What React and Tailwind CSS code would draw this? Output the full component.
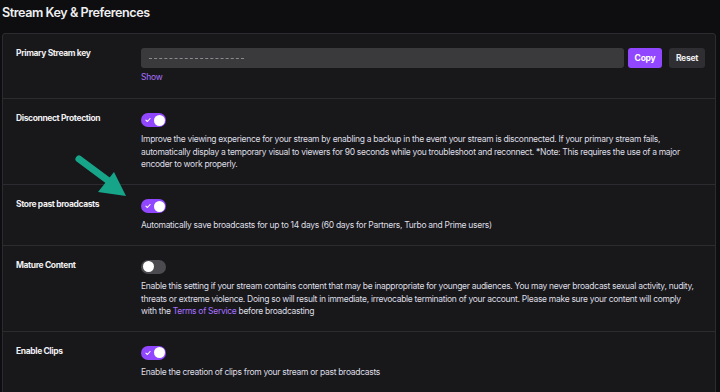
import { useState } from "react";

const ROWS = [
  {
    id: "disconnect",
    label: "Disconnect Protection",
    text: "Improve the viewing experience for your stream by enabling a backup in the event your stream is disconnected. If your primary stream fails, automatically display a temporary visual to viewers for 90 seconds while you troubleshoot and reconnect. *Note: This requires the use of a major encoder to work properly.",
  },
  {
    id: "store",
    label: "Store past broadcasts",
    text: "Automatically save broadcasts for up to 14 days (60 days for Partners, Turbo and Prime users)",
  },
  {
    id: "mature",
    label: "Mature Content",
    text: null,
  },
  {
    id: "clips",
    label: "Enable Clips",
    text: "Enable the creation of clips from your stream or past broadcasts",
  },
];

function Toggle({ on, onChange }) {
  return (
    <button
      onClick={onChange}
      className={`relative block h-[14px] w-[25px] rounded-full ${
        on ? "bg-[#9147ff]" : "bg-[#4b4b50]"
      }`}
    >
      {on && (
        <svg
          viewBox="0 0 10 10"
          className="absolute left-[4px] top-[4px] h-[6px] w-[6px]"
        >
          <path
            d="M1.5 5.2 L4 7.5 L8.5 2.5"
            fill="none"
            stroke="white"
            strokeWidth="1.8"
            strokeLinecap="round"
            strokeLinejoin="round"
          />
        </svg>
      )}
      <span
        className={`absolute top-[1.5px] h-[11px] w-[11px] rounded-full bg-white ${
          on ? "left-[12.5px]" : "left-[1.5px]"
        }`}
      />
    </button>
  );
}

function Label({ children }) {
  return (
    <div className="w-[125px] shrink-0 pt-[13px] text-[8.5px] font-bold leading-[13px] tracking-[-0.045em] text-[#efeff1]">
      {children}
    </div>
  );
}

export default function App() {
  const [toggles, setToggles] = useState({
    disconnect: true,
    store: true,
    mature: false,
    clips: true,
  });

  const flip = (id) => setToggles((prev) => ({ ...prev, [id]: !prev[id] }));

  return (
    <div
      className="relative h-[392px] w-[720px] overflow-hidden bg-[#0e0e10] pl-[2px] pr-[4px]"
      style={{ fontFamily: "Inter, 'Noto Sans', sans-serif" }}
    >
      <h1 className="pt-[3px] text-[12.6px] font-semibold leading-[20px] tracking-[-0.035em] text-[#efeff1]">
        Stream Key &amp; Preferences
      </h1>

      <div className="mt-[10px] rounded-t-[3px] border border-[#2c2c30] bg-[#18181b]">
        {/* stream key */}
        <div className="flex h-[65px] border-b border-[#2c2c30] pl-[13px] pr-[10px]">
          <Label>Primary Stream key</Label>
          <div className="flex-1 pt-[14px]">
            <div className="flex items-center">
              <div className="flex h-[20px] flex-1 items-center rounded-[3px] bg-[#3a3a3d] px-[8px]">
                <span className="w-[95px] border-t border-dashed border-[#8a8a90]" />
              </div>
              <button className="ml-[4px] h-[20px] w-[34px] rounded-[3px] bg-[#9147ff] text-[8.5px] font-bold tracking-[-0.03em] text-white">
                Copy
              </button>
              <button className="ml-[7px] h-[20px] w-[36px] rounded-[3px] bg-[#2f2f33] text-[8.5px] font-bold tracking-[-0.03em] text-[#efeff1]">
                Reset
              </button>
            </div>
            <div className="mt-[3px] text-[8.5px] leading-[13px] tracking-[-0.03em] text-[#a970ff]">
              Show
            </div>
          </div>
        </div>

        {ROWS.map((row, i) => (
          <div
            key={row.id}
            className={`flex pl-[13px] pr-[12px] ${
              i === ROWS.length - 1 ? "" : "border-b border-[#2c2c30]"
            }`}
          >
            <Label>{row.label}</Label>
            <div className="min-w-0 flex-1 pb-[13px] pt-[14px]">
              <Toggle on={toggles[row.id]} onChange={() => flip(row.id)} />
              <p className="mt-[6px] text-[8.5px] leading-[12.7px] tracking-[-0.035em] text-[#dedee3]">
                {row.text ? (
                  row.text
                ) : (
                  <>
                    Enable this setting if your stream contains content that
                    may be inappropriate for younger audiences. You may never
                    broadcast sexual activity, nudity, threats or extreme
                    violence. Doing so will result in immediate, irrevocable
                    termination of your account. Please make sure your content
                    will comply
                    <br />
                    with the{" "}
                    <span className="text-[#a970ff]">Terms of Service</span>{" "}
                    before broadcasting
                  </>
                )}
              </p>
            </div>
          </div>
        ))}
      </div>

      {/* annotation arrow */}
      <svg
        className="pointer-events-none absolute left-[70px] top-[150px] h-[55px] w-[65px]"
        viewBox="0 0 65 55"
      >
        <line
          x1="9"
          y1="9"
          x2="40"
          y2="32"
          stroke="#17a58a"
          strokeWidth="7"
          strokeLinecap="round"
        />
        <polygon points="28,42 44,22 56,46" fill="#17a58a" />
      </svg>
    </div>
  );
}
